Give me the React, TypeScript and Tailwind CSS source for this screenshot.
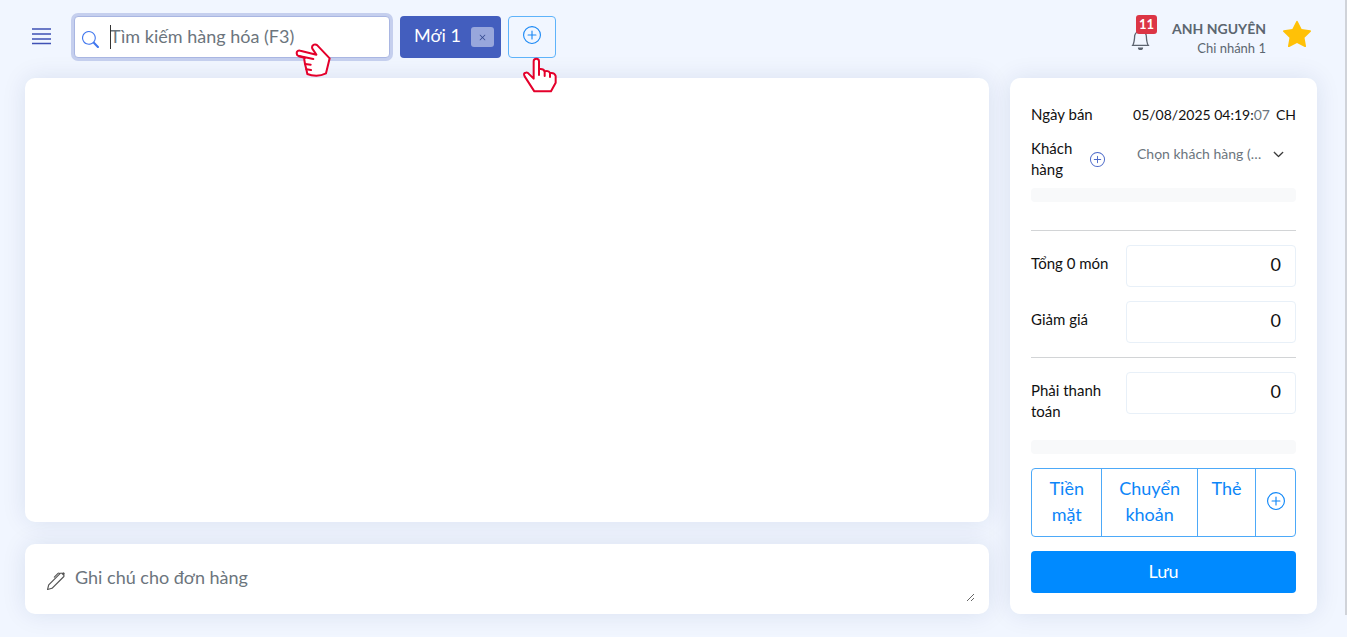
import { useState } from "react";
import { BsBell, BsChevronDown, BsPen, BsPlusCircle, BsSearch, BsStarFill, BsX } from "react-icons/bs";

type Amount = {
  id: string;
  label: string;
};

const SUMMARY: Amount[] = [
  { id: "total", label: "Tổng 0 món" },
  { id: "discount", label: "Giảm giá" },
];

const METHODS = ["Tiền mặt", "Chuyển khoản", "Thẻ"];

const CARD = "rounded-[10px] bg-white shadow-[0_0_24px_rgba(1,41,112,0.1)]";

export default function App() {
  return (
    <div className="relative min-h-screen bg-[#f1f6ff] font-['Lato','Noto_Sans',sans-serif] text-[15px] text-[#111]">
      <Header />
      <main className="flex gap-[21px] pl-[25px] pr-[30px] pb-[22px]">
        <div className="flex min-w-0 flex-1 flex-col gap-[22px]">
          <section className={`flex-1 ${CARD}`} aria-label="Hàng hóa" />
          <section className={`flex h-[70px] gap-2 pl-[22px] pr-[14px] ${CARD}`}>
            <BsPen size={18} className="mt-7 shrink-0 text-[#555]" />
            <textarea
              aria-label="Ghi chú"
              placeholder="Ghi chú cho đơn hàng"
              className="mt-3 h-[46px] min-w-0 max-w-full flex-1 resize pb-2 pl-[2px] pt-[7px] text-lg leading-7 outline-none placeholder:text-[#6c757d]"
            />
          </section>
        </div>
        <OrderPanel />
      </main>
      <div className="absolute right-0 top-0 h-[615px] w-[2px] bg-[#d0d3d9]" />
    </div>
  );
}

function Header() {
  return (
    <header className="flex h-[78px] items-start pl-8 pr-9 pt-4">
      <button type="button" title="Menu" className="mt-[11px] text-[#3f51b5]">
        <svg width="19" height="18" viewBox="0 0 19 18" fill="none">
          <path d="M0 2H19M0 7H19M0 12H19M0 16.5H19" stroke="currentColor" strokeWidth="1.5" />
        </svg>
      </button>

      <div className="relative ml-[23px]">
        <label className="flex h-[42px] w-[316px] items-center rounded-[4px] border border-[#a9b6e2] bg-white pl-[7px] ring-3 ring-[#c5cfee]">
          <BsSearch size={17} className="mt-1 shrink-0 text-[#4177ee]" />
          <input
            type="text"
            aria-label="Tìm kiếm hàng hóa"
            placeholder="Tìm kiếm hàng hóa (F3)"
            className="h-full min-w-0 flex-1 pb-[2px] pl-[11px] text-lg outline-none placeholder:text-[#6c757d]"
          />
        </label>
        <span className="absolute left-9 top-[9px] h-6 w-px bg-[#333]" />
        <HandLeft />
      </div>

      <OrderTab label="Mới 1" />

      <div className="relative ml-[7px]">
        <button
          type="button"
          title="Thêm đơn"
          className="flex h-[42px] w-12 items-center justify-center rounded-[4px] border border-[#5eb3fa] text-[#1a88f5]"
        >
          <BsPlusCircle size={18} className="-mt-1" />
        </button>
        <HandUp />
      </div>

      <div className="ml-auto flex">
        <button type="button" title="Thông báo" className="relative mt-3 h-[22px] w-5 text-[#5c6470]">
          <BsBell size={21} />
          <span className="absolute -top-[13px] left-[6px] flex h-[19px] w-[21px] items-center justify-center rounded-[3px] bg-[#dc3545] text-[13px] font-bold text-white">
            11
          </span>
        </button>
        <div className="ml-[22px] mt-[2px] text-right text-[#5c6670]">
          <div className="text-[14px] font-bold leading-[22px]">ANH NGUYÊN</div>
          <div className="text-[13px] leading-4">Chi nhánh 1</div>
        </div>
        <BsStarFill size={28} className="ml-[17px] mt-1 text-[#ffc107]" />
      </div>
    </header>
  );
}

function OrderTab({ label }: { label: string }) {
  return (
    <div className="ml-[10px] flex h-[42px] w-[101px] items-center rounded-[4px] bg-[#435ebe] pl-[14px] text-lg text-white">
      <button type="button" className="mb-1 whitespace-nowrap">
        {label}
      </button>
      <button
        type="button"
        title="Đóng"
        className="ml-auto mr-[7px] flex h-5 w-[23px] items-center justify-center rounded-[3px] bg-[#98a7dc] text-[#34498f]"
      >
        <BsX size={13} />
      </button>
    </div>
  );
}

function OrderPanel() {
  const [customer, setCustomer] = useState("");

  return (
    <aside className={`w-[307px] shrink-0 px-[21px] pb-[21px] pt-[26px] ${CARD}`}>
      <div className="flex items-center justify-between leading-[21px]">
        <span>Ngày bán</span>
        <span className="whitespace-nowrap text-[14px]">
          05/08/2025 04:19:<span className="text-[#6c757d]">07</span>
          <span className="ml-[6px]">CH</span>
        </span>
      </div>

      <div className="mt-[13px] grid grid-cols-[59px_36px_1fr] leading-[21px]">
        <label htmlFor="customer" className="w-[50px]">
          Khách hàng
        </label>
        <button type="button" title="Thêm khách hàng" className="mt-[13px] h-4 w-4 text-[#4a68c8]">
          <BsPlusCircle size={15} />
        </button>
        <div className="relative mt-[3px] h-[26px]">
          <select
            id="customer"
            value={customer}
            onChange={(e) => setCustomer(e.target.value)}
            className="h-6 w-[140px] appearance-none truncate pl-[11px] text-[14px] text-[#6c757d] outline-none"
          >
            <option value="">Chọn khách hàng (F4)</option>
          </select>
          <BsChevronDown size={11} className="pointer-events-none absolute right-3 top-2 text-[#222]" strokeWidth={1} />
        </div>
      </div>

      <div className="mt-2 h-[14px] rounded-[4px] bg-[#f8f9fa]" />
      <hr className="mb-[14px] mt-7 border-[#d2d4d6]" />

      <div className="flex flex-col gap-[14px]">
        {SUMMARY.map((row) => (
          <AmountRow key={row.id} {...row} />
        ))}
      </div>
      <hr className="my-[14px] border-[#d2d4d6]" />
      <AmountRow id="payable" label="Phải thanh toán" />

      <div className="mt-[18px] h-[14px] rounded-[4px] bg-[#f8f9fa]" />

      <div className="mt-[14px] grid h-[69px] grid-cols-[71fr_96fr_59fr_39fr] divide-x divide-[#4da9f8] rounded-[4px] border border-[#4da9f8] text-lg leading-[26px] text-[#0d86f8]">
        {METHODS.map((m) => (
          <button key={m} type="button" className="flex justify-center px-3 pt-[6px]">
            {m}
          </button>
        ))}
        <button type="button" title="Thêm" className="flex items-center justify-center pb-1">
          <BsPlusCircle size={18} />
        </button>
      </div>

      <button type="button" className="mt-[14px] h-[42px] w-full rounded-[4px] bg-[#008aff] pb-[2px] text-lg text-white">
        Lưu
      </button>
    </aside>
  );
}

function AmountRow({ id, label }: Amount) {
  return (
    <div className="grid grid-cols-[95px_1fr] items-start">
      <label htmlFor={id} className="pr-3 pt-2 leading-[21px]">
        {label}
      </label>
      <input
        id={id}
        type="text"
        defaultValue="0"
        className="h-[42px] w-full rounded-[4px] border border-[#e8f0f8] px-[14px] pb-1 text-right text-lg outline-none"
      />
    </div>
  );
}

function HandLeft() {
  return (
    <svg
      width="36"
      height="36"
      viewBox="0 0 108 108"
      stroke="#e4002b"
      strokeWidth="6"
      strokeLinecap="round"
      strokeLinejoin="round"
      className="pointer-events-none absolute left-[221px] top-[26px]"
    >
      <path d="M30 48L10 42Q3 38 6 29Q9 24 16 26L64 38L52 20Q49 11 57 8Q62 6 67 10L104 49L93 94Q79 101 64 101Q48 101 37 96L34 82L30 66L27 47Z" fill="white" />
      <path d="M12 42L55 51M31 66L47 68M34 82L48 84" fill="none" />
    </svg>
  );
}

function HandUp() {
  return (
    <svg
      width="36"
      height="38"
      viewBox="0 0 108 114"
      stroke="#e4002b"
      strokeWidth="6"
      strokeLinecap="round"
      strokeLinejoin="round"
      className="pointer-events-none absolute left-[14px] top-[40px]"
    >
      <path d="M35 68V16Q35 8 43 8Q51 8 51 16V39Q65 37 68 46Q80 42 84 51Q98 49 101 60V80L87 106H37L8 61Q3 51 11 50Q17 49 22 55Z" fill="white" />
      <path d="M51 39V57M68 46V60M84 51V63" fill="none" />
    </svg>
  );
}
